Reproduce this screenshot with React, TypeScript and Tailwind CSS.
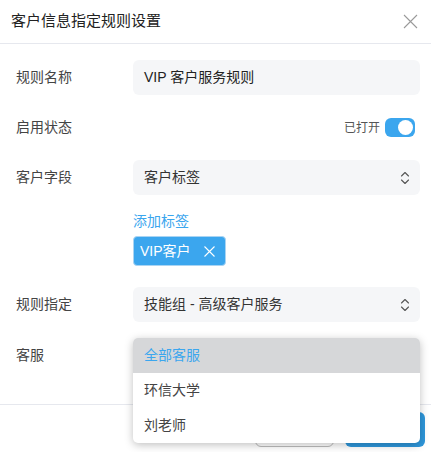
import React from 'react'

const font = { fontFamily: '"Liberation Sans", "Noto Sans CJK SC", sans-serif' }

function Chevrons() {
  return (
    <svg width="10" height="14" viewBox="0 0 10 14" fill="none" stroke="#555" strokeWidth="1.1" strokeLinecap="round" strokeLinejoin="round">
      <path d="M1.5 5 L5 1.5 L8.5 5" />
      <path d="M1.5 9 L5 12.5 L8.5 9" />
    </svg>
  )
}

function Row({ label, children, className = '' }: { label: string; children?: React.ReactNode; className?: string }) {
  return (
    <div className={`flex ${className}`}>
      <div className="w-[117px] shrink-0 h-[35px] flex items-center text-[14px] text-[#444]">{label}</div>
      <div className="flex-1">{children}</div>
    </div>
  )
}

function SelectBox({ value }: { value: string }) {
  return (
    <div className="h-[35px] rounded-[6px] bg-[#f5f6f8] flex items-center justify-between pl-[11px] pr-[10px] text-[14px] text-[#333]">
      <span>{value}</span>
      <Chevrons />
    </div>
  )
}

export default function App() {
  return (
    <div className="w-[431px] h-[452px] bg-white overflow-hidden relative" style={font}>
      <div className="h-[44px] flex items-center justify-between pl-[11px] pr-[13px] border-b border-[#e6e8ee]">
        <span className="text-[15px] text-[#222]">客户信息指定规则设置</span>
        <svg width="15" height="15" viewBox="0 0 15 15" stroke="#9a9a9a" strokeWidth="1.1">
          <path d="M1 1 L14 14 M14 1 L1 14" />
        </svg>
      </div>

      <div className="pt-[16px] pl-[16px] pr-[11px] flex flex-col">
        <Row label="规则名称">
          <div className="h-[35px] rounded-[6px] bg-[#f5f6f8] flex items-center pl-[11px] text-[14px] text-[#222]">
            VIP 客户服务规则
          </div>
        </Row>

        <Row label="启用状态" className="mt-[15px]">
          <div className="h-[35px] flex items-center justify-end gap-[5px] pr-[5px]">
            <span className="text-[12px] text-[#555]">已打开</span>
            <div className="w-[30px] h-[19px] rounded-[6px] bg-[#3ba6ee] flex items-center justify-end pr-[2px]">
              <div className="w-[15px] h-[15px] rounded-full bg-white" />
            </div>
          </div>
        </Row>

        <Row label="客户字段" className="mt-[15px]">
          <SelectBox value="客户标签" />
          <div className="mt-[16px] h-[20px] flex items-center text-[14px] text-[#3ba6ee]">添加标签</div>
          <div className="mt-[5px] inline-flex items-center h-[30px] pl-[6px] pr-[10px] gap-[13px] rounded-[4px] bg-[#3ba6ee] border border-[#a9d4f3] text-white text-[14px]">
            <span>VIP客户</span>
            <svg width="11" height="11" viewBox="0 0 11 11" stroke="white" strokeWidth="1.1">
              <path d="M0.5 0.5 L10.5 10.5 M10.5 0.5 L0.5 10.5" />
            </svg>
          </div>
        </Row>

        <Row label="规则指定" className="mt-[21px]">
          <SelectBox value="技能组 - 高级客户服务" />
        </Row>

        <Row label="客服" className="mt-[16px]">
          <div className="relative h-[35px]">
            <div className="absolute left-0 right-0 top-0 z-10 rounded-[5px] bg-white overflow-hidden shadow-[0_2px_8px_rgba(0,0,0,0.25)] text-[14px]">
              <div className="h-[35px] flex items-center pl-[11px] bg-[#d6d7d9] text-[#3ba6ee]">全部客服</div>
              <div className="h-[35px] flex items-center pl-[11px] text-[#444]">环信大学</div>
              <div className="h-[35px] flex items-center pl-[11px] text-[#444]">刘老师</div>
            </div>
          </div>
        </Row>
      </div>

      <div className="mt-[31px] border-t border-[#e6e8ee] flex justify-end items-start gap-[11px] pt-[7px] pr-[6px]">
        <div className="w-[79px] h-[35px] rounded-[6px] border border-[#bbb] bg-white" />
        <div className="w-[80px] h-[35px] rounded-[6px] bg-[#2e97db]" />
      </div>
    </div>
  )
}
